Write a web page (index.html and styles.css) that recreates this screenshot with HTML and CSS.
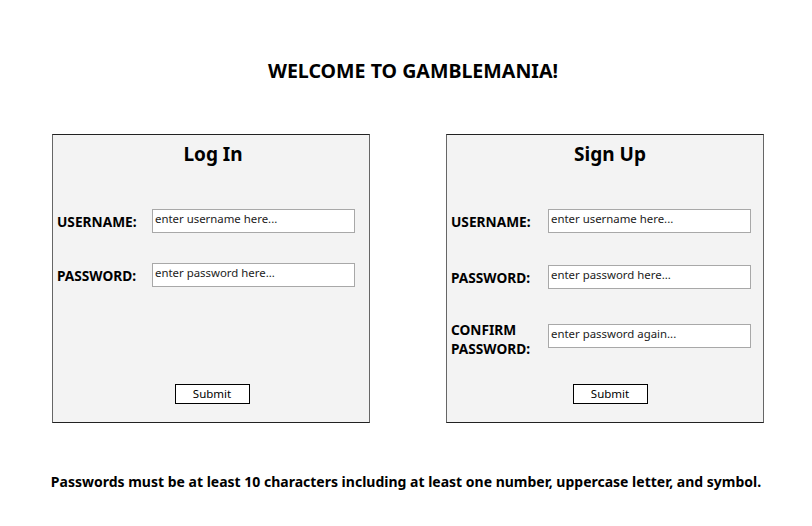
FILE: index.html
```html
<!DOCTYPE html>
<html>
<head>
<meta charset="utf-8">
<link rel="stylesheet" href="styles.css">
</head>
<body>
<h1 class="welcome">WELCOME TO GAMBLEMANIA!</h1>
<div class="panels">
  <form class="panel panel-login">
    <h2 class="panel-title">Log In</h2>
    <div class="row row-first">
      <label class="label">USERNAME:</label>
      <input class="field" type="text" placeholder="enter username here...">
    </div>
    <div class="row row-login-pass">
      <label class="label">PASSWORD:</label>
      <input class="field" type="password" placeholder="enter password here...">
    </div>
    <div class="actions">
      <button class="submit" type="button">Submit</button>
    </div>
  </form>
  <form class="panel panel-signup">
    <h2 class="panel-title">Sign Up</h2>
    <div class="row row-first">
      <label class="label">USERNAME:</label>
      <input class="field" type="text" placeholder="enter username here...">
    </div>
    <div class="row row-signup-pass">
      <label class="label">PASSWORD:</label>
      <input class="field" type="password" placeholder="enter password here...">
    </div>
    <div class="row row-confirm">
      <label class="label">CONFIRM PASSWORD:</label>
      <input class="field" type="password" placeholder="enter password again...">
    </div>
    <div class="actions">
      <button class="submit" type="button">Submit</button>
    </div>
  </form>
</div>
<p class="rules">Passwords must be at least 10 characters including at least one number, uppercase letter, and symbol.</p>
</body>
</html>
```
FILE: styles.css
```css
* { box-sizing: border-box; }
html, body { margin: 0; padding: 0; background: #fff; }
body {
  font-family: "Noto Sans", "Open Sans", sans-serif;
  color: #000;
  width: 812px;
  height: 526px;
  overflow: hidden;
}
.welcome {
  margin: 0;
  padding-top: 58px;
  font-size: 19.6px;
  line-height: 26px;
  font-weight: 700;
  text-align: center;
  padding-left: 14px;
}
.panels {
  display: flex;
  gap: 76px;
  padding-left: 52px;
  margin-top: 50px;
}
.panel {
  width: 318px;
  height: 289px;
  background: #f3f3f3;
  border: 1px solid #222;
  border-left-color: #666;
  border-right-color: #666;
  display: flex;
  flex-direction: column;
  padding: 0;
  margin: 0;
}
.panel-title {
  margin: 0;
  padding-top: 6px;
  font-size: 19px;
  line-height: 26px;
  font-weight: 700;
  text-align: center;
}
.panel-login .panel-title { padding-left: 4px; }
.panel-login .actions { padding-left: 2px; }
.panel-signup .panel-title,
.panel-signup .actions { padding-left: 10px; }
.row {
  display: flex;
  align-items: center;
  padding-left: 4px;
}
.row-first { margin-top: 42px; }
.row-login-pass { margin-top: 30px; }
.row-signup-pass { margin-top: 32px; }
.row-confirm { margin-top: 31px; align-items: flex-start; }
.label {
  width: 95px;
  flex: none;
  font-size: 13.7px;
  line-height: 19px;
  font-weight: 700;
}
.panel-signup .label { width: 97px; }
.row-confirm .field { margin-top: 4px; }
.field {
  width: 203px;
  height: 24px;
  border: 1px solid #a8a8a8;
  background: #fff;
  font-family: "Noto Sans", "Open Sans", sans-serif;
  font-size: 11.4px;
  padding: 0 2px 5px;
  margin: 0;
  color: #222;
  outline: none;
}
.field::placeholder { color: #222; opacity: 1; }
.actions {
  margin-top: auto;
  margin-bottom: 18px;
  display: flex;
  justify-content: center;
}
.submit {
  width: 75px;
  height: 20px;
  background: #fff;
  border: 1px solid #000;
  border-radius: 0;
  font-family: "Noto Sans", "Open Sans", sans-serif;
  font-size: 11.5px;
  line-height: 16px;
  padding: 0;
  color: #000;
}
.rules {
  margin: 50px 0 0;
  font-size: 14px;
  font-weight: 700;
  text-align: center;
  line-height: 18px;
}
```
